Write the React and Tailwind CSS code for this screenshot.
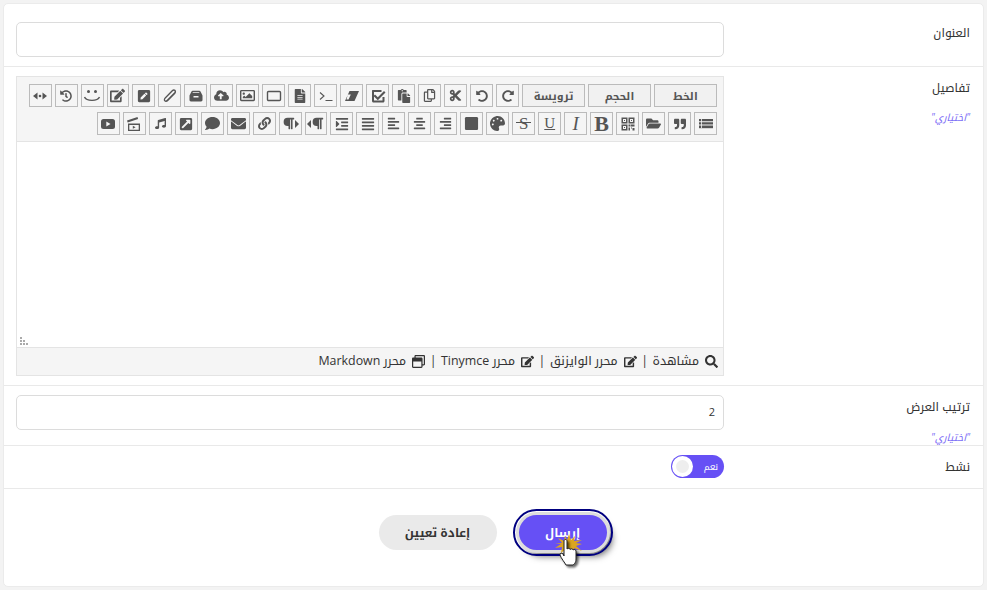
import React from "react";
import {
  FaHistory, FaEdit, FaPenSquare, FaCloudUploadAlt, FaRegImage, FaFileAlt, FaPaste, FaRegCopy, FaCut, FaUndoAlt, FaRedoAlt,
  FaMusic, FaExternalLinkSquareAlt, FaComment, FaEnvelope, FaLink, FaParagraph, FaIndent, FaAlignJustify, FaAlignLeft, FaAlignCenter, FaAlignRight, FaSquare, FaPalette, FaFolderOpen, FaQuoteRight, FaSearch, FaRegWindowRestore,
} from "react-icons/fa";

const S = ({ children }) => (
  <svg width="16" height="16" viewBox="0 0 16 16" fill="currentColor" stroke="none">{children}</svg>
);

const Code = () => (
  <S>
    <path d="M5.500 4.500 1 8l4.500 3.500z" />
    <path d="M10.500 4.500 15 8l-4.500 3.500z" />
    <circle cx="8" cy="8" r="1.300" />
  </S>
);
const Smile = () => (
  <svg width="18" height="16" viewBox="0 0 18 16" fill="none" stroke="currentColor">
    <circle cx="5.500" cy="3.500" r="1.500" fill="currentColor" stroke="none" />
    <circle cx="12.500" cy="3.500" r="1.500" fill="currentColor" stroke="none" />
    <path d="M1.500 9c2 4.500 13 4.500 15 0" strokeWidth="1.400" />
  </svg>
);
const Rect = () => (
  <S><rect x="1.500" y="3.500" width="13" height="9" rx="1" fill="none" stroke="currentColor" strokeWidth="1.400" /></S>
);
const YT = () => (
  <S><rect x="1" y="3" width="14" height="10" rx="2.500" /><path d="M6.300 5.600v4.800l4.200-2.400z" fill="#f5f5f5" /></S>
);
const Clapper = () => (
  <S>
    <path d="M1 4.500 11.500 1l.6 2L1.700 6.500zM2 7.500h12V15H2zM3.300 9v4.700h9.400V9z" fillRule="evenodd" />
    <path d="M6.800 9.800v3l2.800-1.500z" />
  </S>
);
const Pen = () => (
  <S><path d="M13.300 1.800c-1.100-1-2.500-.6-3.500.4L3 9.200c-1.300 1.400-1.700 3-.6 4.100 1 1 2.700.7 4-.6l6.900-7c1-1 1.100-2.800 0-3.900zM3.900 10.200l6.900-7c.5-.5 1.100-.8 1.600-.3s.2 1.200-.3 1.700l-6.900 7c-.8.800-1.600 1.100-2 .7-.5-.5 0-1.300.7-2.100z" fillRule="evenodd" /></S>
);
const Archive = () => (
  <S><path d="M1.500 7.500 3.500 3.500C3.800 3 4.200 2.800 4.600 2.800h6.800c.4 0 .8.200 1.100.7l2 4V12c0 .8-.6 1.400-1.400 1.400H2.900C2.100 13.400 1.500 12.800 1.500 12zM4.500 5h7l-.4-.8H4.900zM5.500 8v1.500h5V8z" fillRule="evenodd" /></S>
);
const Check = () => (
  <S>
    <path d="M2.500 2h9v2h-7.500v8.500H12.500V9h2v4c0 .8-.6 1.500-1.500 1.500H3.500C2.700 14.500 2 13.800 2 13V3c0-.5.200-1 .5-1z" />
    <path d="M5 6.500 7.800 9.300 14 3l1.500 1.500-7.700 7.700L3.500 8z" />
  </S>
);
const Eraser = () => (
  <S><path d="M5.500 3H15l-4.500 10H1zM4.500 11.500l2.300-5H3.800L2.500 11.500z" fillRule="evenodd" /></S>
);
const Terminal = () => (
  <S><path d="M2 4.500 6 8l-4 3.500M7.500 12.500h7" fill="none" stroke="currentColor" strokeWidth="1.100" /></S>
);
const Qr = () => (
  <S>
    <path d="M1.500 1.500h6v6h-6zM3 3v3h3V3zM8.500 1.500h6v6h-6zM10 3v3h3V3zM1.500 8.500h6v6h-6zM3 10v3h3v-3z" fillRule="evenodd" />
    <path d="M4 4h1v1H4zM11 4h1v1h-1zM4 11h1v1H4zM8.500 8.500h2v2h-2zM11 8.500h3.500v2H11zM8.500 11.500h1.500v3H8.500zM11 11.500h1v1h-1zM12.500 12h2v2.500h-2z" />
  </S>
);
const ListI = () => (
  <S>
    <path d="M1 3h2.200v2.300H1zM4 3h11v2.300H4zM1 6.300h2.200v2.300H1zM4 6.300h11v2.300H4zM1 9.600h2.200v2.300H1zM4 9.600h11v2.300H4z" />
    <path d="M1 12.800h14v.2H1z" />
  </S>
);
const ParaRight = () => (
  <span className="flex items-center"><FaParagraph size={13} /><svg width="4" height="8" viewBox="0 0 4 8" fill="currentColor"><path d="M4 0v8L0 4z" /></svg></span>
);
const ParaLeft = () => (
  <span className="flex items-center"><svg width="4" height="8" viewBox="0 0 4 8" fill="currentColor"><path d="M0 0v8l4-4z" /></svg><FaParagraph size={13} /></span>
);
const serif = "font-['Liberation_Serif',serif] leading-none";

const row1 = [
  <FaRedoAlt size={12} />, <FaUndoAlt size={12} />, <FaCut size={13} />, <FaRegCopy size={13} />, <FaPaste size={14} />, <Check />, <Eraser />, <Terminal />, <FaFileAlt size={14} />, <Rect />, <FaRegImage size={15} />, <FaCloudUploadAlt size={15} />, <Archive />, <Pen />, <FaPenSquare size={14} />, <FaEdit size={15} />, <Smile />, <FaHistory size={12} />, <Code />,
];
const row2 = [
  <ListI />, <FaQuoteRight size={12} />, <FaFolderOpen size={15} />, <Qr />,
  <span className={`${serif} font-bold text-[22px]`}>B</span>,
  <span className={`${serif} italic text-[19px]`}>I</span>,
  <span className={`${serif} underline text-[15px]`}>U</span>,
  <span className={`${serif} text-[17px] relative`}>S<span className="absolute left-[-3px] right-[-3px] top-[7px] h-px bg-[#555555]" /></span>,
  <FaPalette size={15} />, <FaSquare size={15} />, <FaAlignRight size={13} />, <FaAlignCenter size={13} />, <FaAlignLeft size={13} />, <FaAlignJustify size={14} />, <FaIndent size={14} />, <ParaRight />, <ParaLeft />, <FaLink size={13} />, <FaEnvelope size={15} />, <FaComment size={15} />, <FaExternalLinkSquareAlt size={14} />, <FaMusic size={11} />, <Clapper />, <YT />,
];

const IconBtn = ({ children }) => (
  <div className="w-[22.98px] h-[23px] shrink-0 flex items-center justify-center bg-[#f5f5f5] border border-[#bbbbbb] text-[#555555]">
    {children}
  </div>
);
const TextBtn = ({ children }) => (
  <div className="w-[63px] h-[23px] shrink-0 flex items-center justify-center bg-[#f1f1f1] border border-[#bbbbbb] text-[#555555] text-[11px] font-bold leading-none">
    {children}
  </div>
);
const Optional = () => (
  <div className="text-[10px] italic text-[#7b6cf6] leading-none">"اختياري"</div>
);
const Input = ({ children }) => (
  <div className="h-[35px] bg-white border border-[#dcdcdc] rounded-[5px] flex items-center px-[8px] text-[11px] text-[#333333]">{children}</div>
);
const Sep = () => <span className="-mx-[1.5px]">|</span>;

export default function App() {
  return (
    <div dir="rtl" className="w-[987px] h-[590px] bg-[#f3f3f3] p-[3px] font-['Open_Sans','Noto_Kufi_Arabic',sans-serif] text-[#333333] overflow-hidden">
      <div className="h-[584px] bg-white border border-[#ebebeb] rounded-[5px] flex flex-col">
        <div className="h-[63px] shrink-0 flex border-b border-[#e9e9e9]">
          <div className="w-[259px] shrink-0 pr-[13px] pt-[20px] text-[12px] leading-[18px]">العنوان</div>
          <div className="w-[708px] pt-[18px]"><Input /></div>
        </div>

        <div className="h-[319px] shrink-0 flex border-b border-[#e9e9e9]">
          <div className="w-[259px] shrink-0 pr-[13px] pt-[12px]">
            <div className="text-[12px] leading-[18px]">تفاصيل</div>
            <div className="mt-[15px]"><Optional /></div>
          </div>
          <div className="w-[708px] pt-[9px]">
            <div className="h-[300px] border border-[#e4e4e4] bg-[#f5f5f5] flex flex-col">
              <div className="h-[64px] shrink-0 pt-[7px] pr-[6px] flex flex-col gap-[5px]">
                <div className="flex gap-[3px]">
                  <TextBtn>الخط</TextBtn>
                  <TextBtn>الحجم</TextBtn>
                  <TextBtn>ترويسة</TextBtn>
                  {row1.map((c, i) => <IconBtn key={i}>{c}</IconBtn>)}
                </div>
                <div className="flex gap-[3px]">
                  {row2.map((c, i) => <IconBtn key={i}>{c}</IconBtn>)}
                </div>
              </div>
              <div className="relative flex-1 bg-white border-y border-[#e4e4e4]">
                <svg className="absolute left-[2px] bottom-[1px]" width="10" height="10" viewBox="0 0 10 10" fill="#aaaaaa">
                  <rect x="1" y="7" width="2" height="2" /><rect x="4" y="7" width="2" height="2" /><rect x="7" y="7" width="2" height="2" /><rect x="1" y="4" width="2" height="2" /><rect x="4" y="4" width="2" height="2" /><rect x="1" y="1" width="2" height="2" />
                </svg>
              </div>
              <div className="h-[27px] shrink-0 flex items-center gap-[6px] pr-[5px] text-[12.4px] text-[#333333] leading-none">
                <FaSearch size={13} /><span>مشاهدة</span><Sep />
                <FaEdit size={13} /><span>محرر الوايزنق</span><Sep />
                <FaEdit size={13} /><span>محرر Tinymce</span><Sep />
                <FaRegWindowRestore size={13} /><span>محرر Markdown</span>
              </div>
            </div>
          </div>
        </div>

        <div className="h-[60px] shrink-0 flex border-b border-[#e9e9e9]">
          <div className="w-[259px] shrink-0 pr-[13px] pt-[12px]">
            <div className="text-[12px] leading-[18px]">ترتيب العرض</div>
            <div className="mt-[16px]"><Optional /></div>
          </div>
          <div className="w-[708px] pt-[9px]"><Input>2</Input></div>
        </div>

        <div className="h-[43px] shrink-0 flex items-center border-b border-[#e9e9e9]">
          <div className="w-[259px] shrink-0 pr-[13px] text-[12px] leading-[18px]">نشط</div>
          <div className="h-[23px] w-[53px] -mt-[2px] rounded-full bg-[#6650f5] flex items-center justify-between pr-[6px] pl-[1px]">
            <span className="text-[9px] text-white leading-none">نعم</span>
            <div className="w-[21px] h-[21px] rounded-full bg-white flex items-center justify-center">
              <div className="w-[13px] h-[13px] rounded-full bg-[#eeeeee]" />
            </div>
          </div>
        </div>

        <div className="flex-1 flex justify-center items-start gap-[22px] pt-[26px] pr-[2px]">
          <div className="relative w-[88px] h-[35px] rounded-full bg-[#6650f5] text-white text-[12px] font-bold flex items-center justify-center outline-[2px] outline-solid outline-[#000080] shadow-[0_0_0_3px_#dddddd,5px_6px_7px_rgba(0,0,0,0.6)] outline-offset-[4px]">
            إرسال
            <svg className="absolute left-[36px] top-[19px]" width="30" height="36" viewBox="0 0 30 36">
              <path d="M14 0l2 6 4-4-1 5 8-1-6 3 6 1-6 2 6 5-8-3 1 5-5-4-2 5-2-5-5 4 1-6-7 1 6-4L0 9l7 0-4-5 6 3 1-5 2 4z" fill="#daa520" />
              <path d="M9 7c0-2 3-2 3 0v8c1-1 3-1 3 .5 1-1 3-1 3 .5 1-1 3-.5 3 1v8c0 4-2 5-3 6h-7c-1-2-5-7-6-10-.5-2 2-2.500 3-1l1 2z" fill="#ffffff" stroke="#222222" strokeWidth="1" style={{ filter: "drop-shadow(2px 2px 1px rgba(0,0,0,0.6))" }} />
            </svg>
          </div>
          <div className="w-[118px] h-[35px] rounded-full bg-[#eaeaea] text-[#333333] text-[12px] font-bold flex items-center justify-center">إعادة تعيين</div>
        </div>
      </div>
    </div>
  );
}
